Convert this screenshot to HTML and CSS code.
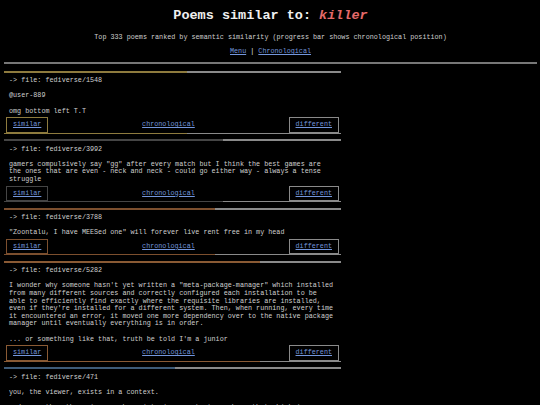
FILE: index.html
```html
<!DOCTYPE html>
<html lang="en">
<head>
<meta charset="utf-8">
<title>Poems similar to: killer</title>
<link rel="stylesheet" href="styles.css">
</head>
<body>
<header class="top">
  <h1 class="title">Poems similar to: <em class="query">killer</em></h1>
  <p class="subtitle">Top 333 poems ranked by semantic similarity (progress bar shows chronological position)</p>
  <nav class="links"><a href="#">Menu</a> | <a href="#">Chronological</a></nav>
</header>
<hr class="rule">
<main class="list">
  <article class="poem" style="--p:54.3%;--c:#8e7b3e">
    <div class="bar"></div>
    <div class="body">-&gt; file: fediverse/1548

@user-889

omg bottom left T.T</div>
    <div class="actions"><a class="btn sim" href="#">similar</a><a class="mid" href="#">chronological</a><a class="btn diff" href="#">different</a></div>
  </article>
  <article class="poem" style="--p:65%;--c:#454545">
    <div class="bar"></div>
    <div class="body">-&gt; file: fediverse/3992

gamers compulsively say "gg" after every match but I think the best games are the ones that are even - neck and neck - could go either way - always a tense struggle</div>
    <div class="actions"><a class="btn sim" href="#">similar</a><a class="mid" href="#">chronological</a><a class="btn diff" href="#">different</a></div>
  </article>
  <article class="poem" style="--p:62.6%;--c:#7c4f2e">
    <div class="bar"></div>
    <div class="body">-&gt; file: fediverse/3788

"Zoontalu, I have MEESed one" will forever live rent free in my head</div>
    <div class="actions"><a class="btn sim" href="#">similar</a><a class="mid" href="#">chronological</a><a class="btn diff" href="#">different</a></div>
  </article>
  <article class="poem" style="--p:76%;--c:#8a5a34">
    <div class="bar"></div>
    <div class="body">-&gt; file: fediverse/5282

I wonder why someone hasn't yet written a "meta-package-manager" which installed from many different sources and correctly configured each installation to be able to efficiently find exactly where the requisite libraries are installed, even if they're installed for a different system. Then, when running, every time it encountered an error, it moved one more dependency over to the native package manager until eventually everything is in order.

... or something like that, truth be told I'm a junior</div>
    <div class="actions"><a class="btn sim" href="#">similar</a><a class="mid" href="#">chronological</a><a class="btn diff" href="#">different</a></div>
  </article>
  <article class="poem" style="--p:50.7%;--c:#3e5b78">
    <div class="bar"></div>
    <div class="body">-&gt; file: fediverse/471

you, the viewer, exists in a context.

and you, the other viewer, who exists in a contexts such as that which is</div>
    <div class="actions"><a class="btn sim" href="#">similar</a><a class="mid" href="#">chronological</a><a class="btn diff" href="#">different</a></div>
  </article>
</main>
</body>
</html>
```
FILE: styles.css
```css
html {
  background: #000;
}

body {
  margin: 0 3px 0 4px;
  background: #000;
  color: #cfcfcf;
  font-family: "Liberation Mono", "DejaVu Sans Mono", monospace;
  font-size: 6.75px;
  line-height: normal;
}

a {
  color: #7396dc;
  text-decoration: underline;
}

.top {
  text-align: center;
  padding-top: 8px;
}

.title {
  margin: 0;
  font-size: 13.5px;
  font-weight: bold;
  color: #f0f0f0;
  line-height: normal;
}

.query {
  color: #e46a6a;
}

.subtitle {
  margin: 10px 0 0;
}

.links {
  margin-top: 6.3px;
  color: #e0e0e0;
}

.rule {
  margin: 7px 0 0;
  border: 0;
  height: 2px;
  background: #777;
}

.list {
  margin-top: 6.5px;
  width: 337px;
  line-height: 7.6px;
}

.poem {
  margin-bottom: 5.3px;
}

.bar {
  height: 2px;
  background: linear-gradient(to right, var(--c) var(--p), #8a8a8a var(--p));
}

.body {
  white-space: pre-wrap;
  width: 80.5ch;
  padding: 4.5px 5px 0;
  margin-bottom: 2px;
}

.actions {
  display: flex;
  justify-content: space-between;
  align-items: flex-end;
  padding: 0 2px 1px;
  background: linear-gradient(to right, var(--c) var(--p), #8a8a8a var(--p)) left bottom / 100% 1px no-repeat;
}

.btn {
  border: 1px solid #8a8a8a;
  padding: 3px 6px;
}

.sim {
  border-color: var(--c);
}

.mid {
  padding: 4px 0;
}
```
